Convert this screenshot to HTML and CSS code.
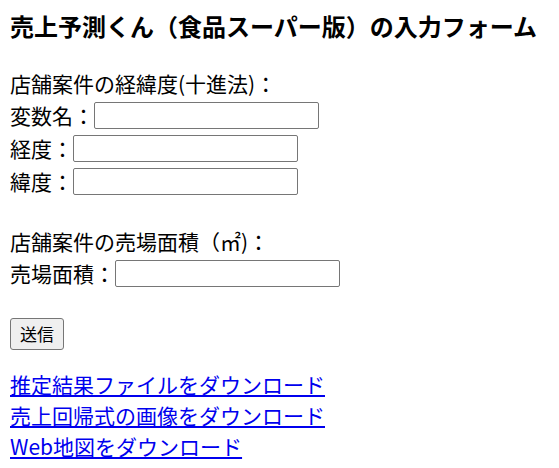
FILE: index.html
```html
<!DOCTYPE html>
<html lang="ja">
<head>
    <meta charset="UTF-8">
    <title>売上予測くん（食品スーパー版）の入力フォーム</title>
    <link rel="stylesheet" href="styles.css">
</head>
<body>
    <h1 class="title">売上予測くん（食品スーパー版）の入力フォーム</h1>

    <form class="form">
        <div class="group">
            <div class="line">店舗案件の経緯度(十進法)：</div>
            <label class="field">変数名：<input type="text" class="box" name="name"></label>
            <label class="field">経度：<input type="text" class="box" name="lon"></label>
            <label class="field">緯度：<input type="text" class="box" name="lat"></label>
        </div>

        <div class="group">
            <div class="line">店舗案件の売場面積（㎡)：</div>
            <label class="field">売場面積：<input type="text" class="box" name="area"></label>
        </div>

        <div class="actions">
            <input type="submit" class="send" value="送信">
        </div>
    </form>

    <div class="downloads">
        <a href="#">推定結果ファイルをダウンロード</a><br>
        <a href="#">売上回帰式の画像をダウンロード</a><br>
        <a href="#">Web地図をダウンロード</a>
    </div>
</body>
</html>
```

FILE: styles.css
```css
body{
    margin: 8px 10px;
    font-family: "Noto Sans CJK JP", "Noto Sans", sans-serif;
    font-size: 21px;
    line-height: 31px;
    color: #000;
    background: #fff;
}

.title{
    margin: 0 0 25px;
    font-size: 24px;
    line-height: 35px;
    font-weight: bold;
}

.form{
    margin: 0;
}

.group + .group{
    margin-top: 28px;
}

.line{
    height: 31px;
}

.field{
    display: flex;
    align-items: center;
    height: 33px;
}

.box{
    box-sizing: border-box;
    width: 225px;
    height: 27px;
    margin: 0;
    padding: 1px 3px;
    border: 1px solid #767676;
    border-radius: 2px;
    font-size: 14px;
    background: #fff;
}

.actions{
    margin-top: 27px;
    height: 31px;
}

.send{
    box-sizing: border-box;
    height: 32px;
    padding: 0 9px;
    font-family: "Noto Sans CJK JP", sans-serif;
    font-size: 17px;
    color: #000;
    background: #efefef;
    border: 1px solid #767676;
    border-radius: 3px;
}

.downloads{
    margin-top: 21px;
}

.downloads a{
    color: #0000ee;
}
```
